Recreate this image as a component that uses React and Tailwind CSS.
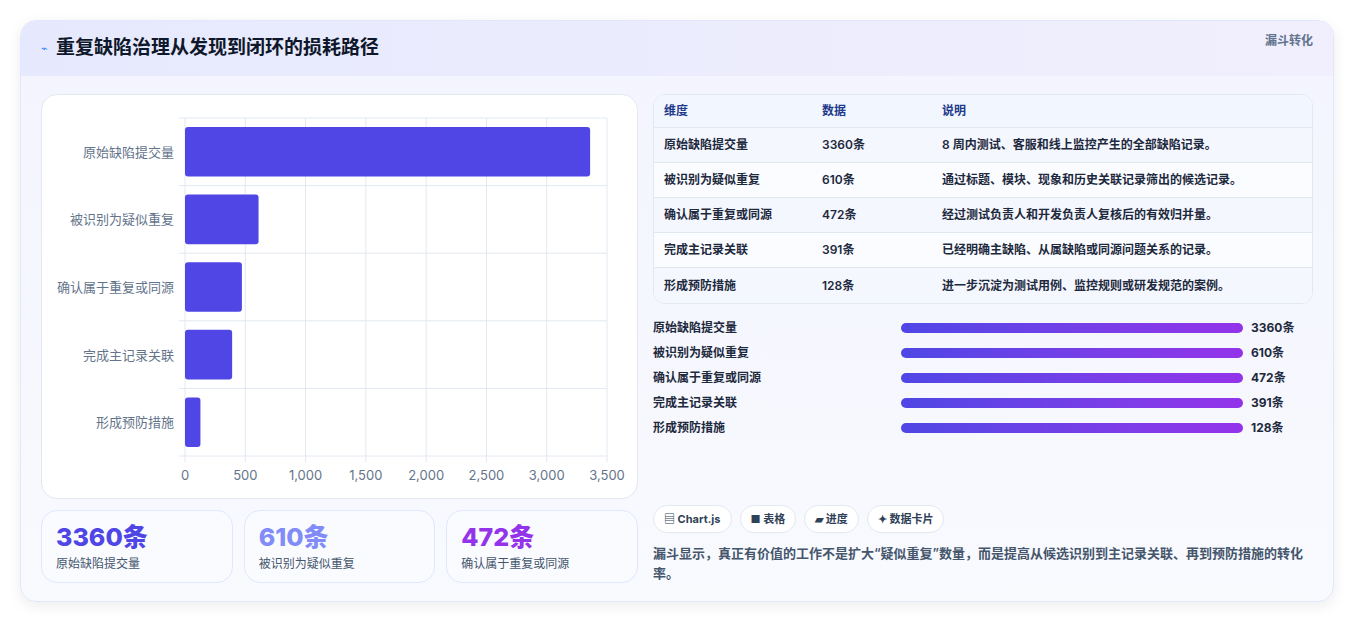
import React from 'react'

const rows = [
  { name: '原始缺陷提交量', v: 3360, desc: '8 周内测试、客服和线上监控产生的全部缺陷记录。' },
  { name: '被识别为疑似重复', v: 610, desc: '通过标题、模块、现象和历史关联记录筛出的候选记录。' },
  { name: '确认属于重复或同源', v: 472, desc: '经过测试负责人和开发负责人复核后的有效归并量。' },
  { name: '完成主记录关联', v: 391, desc: '已经明确主缺陷、从属缺陷或同源问题关系的记录。' },
  { name: '形成预防措施', v: 128, desc: '进一步沉淀为测试用例、监控规则或研发规范的案例。' },
]

function Chart() {
  const L = 143, T = 23, W = 422, H = 338
  const band = H / 5
  const ticks = [0, 500, 1000, 1500, 2000, 2500, 3000, 3500]
  return (
    <svg width="597" height="403" className="block">
      {ticks.map(t => {
        const x = L + (t / 3500) * W
        return (
          <g key={t}>
            <line x1={x} y1={T} x2={x} y2={T + H + 6} stroke="#e2e8f0" />
            <text x={x} y={T + H + 24} textAnchor="middle" fontSize="13" fill="#64748b">{t.toLocaleString('en-US')}</text>
          </g>
        )
      })}
      {[0, 1, 2, 3, 4, 5].map(i => (
        <line key={i} x1={L - 6} x2={L + W} y1={T + i * band} y2={T + i * band} stroke="#e2e8f0" />
      ))}
      {rows.map((r, i) => (
        <g key={r.name}>
          <rect x={L} y={T + i * band + 9} width={(r.v / 3500) * W} height={band - 18} rx="3" fill="#4f46e5" />
          <text x={L - 11} y={T + i * band + band / 2 + 5} textAnchor="end" fontSize="13" fill="#64748b">{r.name}</text>
        </g>
      ))}
    </svg>
  )
}

export default function App() {
  return (
    <div className="min-h-[621px] bg-white p-5 text-slate-700" style={{ fontFamily: 'Inter, "Noto Sans CJK SC", sans-serif' }}>
      <div className="rounded-2xl border border-indigo-100 bg-gradient-to-b from-[#f3f4fe] to-[#f8fafe] shadow-[0_4px_14px_rgba(15,23,42,0.08)] overflow-hidden">
        <div className="flex h-[55px] items-center justify-between bg-gradient-to-r from-[#e6e9fd] to-[#f1effd] pl-5 pr-5">
          <div className="flex items-center gap-2">
            <span className="text-[11px] text-blue-500">⌁</span>
            <h1 className="text-[19px] font-bold text-slate-900">重复缺陷治理从发现到闭环的损耗路径</h1>
          </div>
          <span className="-mt-4 text-[12px] font-bold text-slate-500">漏斗转化</span>
        </div>
        <div className="flex gap-[15px] px-5 pb-[18px] pt-[18px]">
          <div className="flex w-[597px] flex-col gap-[11px]">
            <div className="rounded-2xl border border-slate-200 bg-white">
              <Chart />
            </div>
            <div className="grid grid-cols-3 gap-[11px]">
              {[
                ['3360条', '原始缺陷提交量', 'text-[#4f46e5]'],
                ['610条', '被识别为疑似重复', 'text-[#818cf8]'],
                ['472条', '确认属于重复或同源', 'text-[#9333ea]'],
              ].map(([v, l, c]) => (
                <div key={l} className="h-[73px] rounded-2xl border border-indigo-100 bg-[#fafbff] px-[14px] pt-2">
                  <div className={`text-[25px] font-extrabold leading-[36px] ${c}`}>{v}</div>
                  <div className="text-[12px] text-slate-600">{l}</div>
                </div>
              ))}
            </div>
          </div>
          <div className="flex flex-1 flex-col">
            <div className="overflow-hidden rounded-xl border border-slate-200 bg-white text-[12px]">
              <div className="flex h-[33px] items-center border-b border-slate-200 bg-[#f2f6fe] px-[10px] font-bold text-[#1e3a8a]">
                <div className="w-[158px]">维度</div><div className="w-[120px]">数据</div><div>说明</div>
              </div>
              {rows.map((r, i) => (
                <div key={r.name} className={`flex h-[35px] items-center px-[10px] font-semibold text-slate-800 ${i < 4 ? 'border-b border-slate-200' : ''} ${i % 2 ? 'bg-[#fafcff]' : 'bg-[#f5f7fe]'}`}>
                  <div className="w-[158px]">{r.name}</div><div className="w-[120px]">{r.v}条</div><div>{r.desc}</div>
                </div>
              ))}
            </div>
            <div className="mt-[11px] flex flex-col">
              {rows.map(r => (
                <div key={r.name} className="flex h-[25px] items-center text-[12px] font-semibold text-slate-800">
                  <div className="w-[248px]">{r.name}</div>
                  <div className="h-[10px] w-[342px] rounded-full bg-gradient-to-r from-[#4f46e5] to-[#9333ea]" />
                  <div className="ml-2 font-bold">{r.v}条</div>
                </div>
              ))}
            </div>
            <div className="mt-auto flex gap-2 text-[11px] font-bold text-slate-700">
              {['▤ Chart.js', '■ 表格', '▰ 进度', '✦ 数据卡片'].map(p => (
                <span key={p} className="rounded-full border border-slate-200 bg-white px-[10px] py-[5px]">{p}</span>
              ))}
            </div>
            <p className="mt-[10px] text-[13px] font-semibold leading-[20px] text-slate-600">漏斗显示，真正有价值的工作不是扩大“疑似重复”数量，而是提高从候选识别到主记录关联、再到预防措施的转化率。</p>
          </div>
        </div>
      </div>
    </div>
  )
}
